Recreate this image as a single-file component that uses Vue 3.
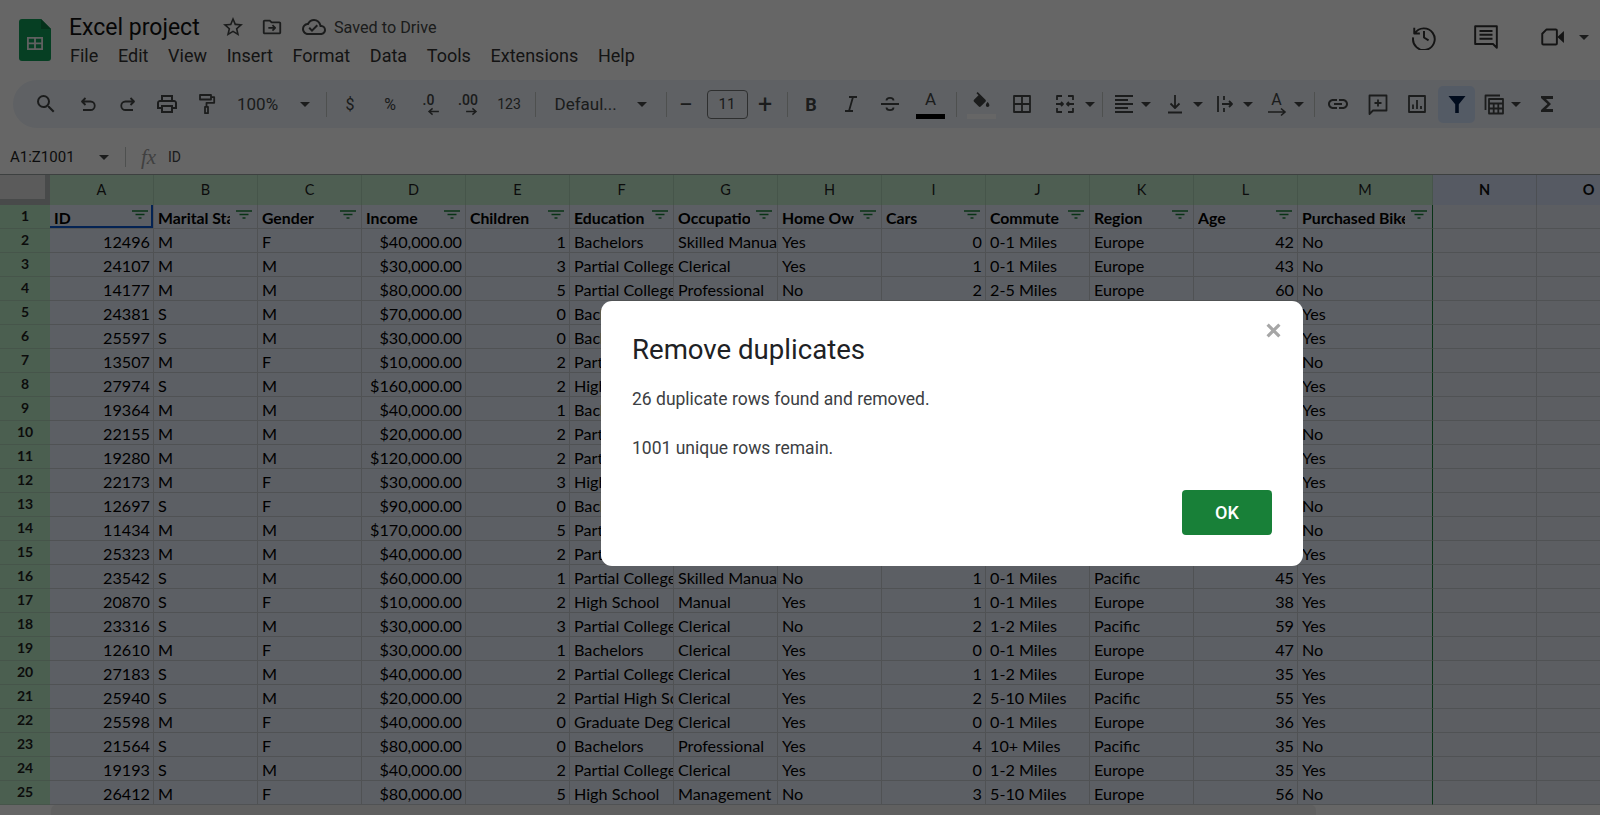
<template>
  <div class="page">
    <header class="top">
      <svg class="logo" viewBox="0 0 32 42">
        <path d="M3 0h19l10 10v29a3 3 0 0 1-3 3H3a3 3 0 0 1-3-3V3a3 3 0 0 1 3-3z" fill="#0f9d58" />
        <path d="M22 0l10 10H22z" fill="#0a7a43" />
        <path d="M8 18h16v13H8z M9.8 19.8v3.6h5.3v-3.6z M16.9 19.8v3.6h5.3v-3.6z M9.8 25.2v4h5.3v-4z M16.9 25.2v4h5.3v-4z" fill="#f1f1f1" fill-rule="evenodd" />
      </svg>
      <div class="top-mid">
        <div class="title-row">
          <span class="doc-title">Excel project</span>
          <Ic class="t-star" name="star" />
          <Ic class="t-folder" name="folder" />
          <Ic class="t-cloud" name="cloud" />
          <span class="saved">Saved to Drive</span>
        </div>
        <nav class="menu">
          <span v-for="m in menus" :key="m">{{ m }}</span>
        </nav>
      </div>
      <div class="top-right">
        <Ic class="big" name="history" />
        <Ic class="big comments" name="comments" />
        <Ic class="big video" name="video" />
        <span class="arr video-arr"></span>
      </div>
    </header>

    <div class="toolbar">
      <div
        v-for="(item, i) in tools"
        :key="i"
        class="tool"
        :class="item.cls"
        :style="{ width: item.w + 'px', marginLeft: item.ml + 'px' }"
      >
        <Ic v-if="item.ic" :name="item.ic" />
        <span v-if="item.t">{{ item.t }}</span>
        <svg v-if="item.dir" class="small-arrow" :class="item.dir" viewBox="0 0 14 10">
          <path d="M1 5h11 M8 1.5l4 3.5-4 3.5" />
        </svg>
        <svg v-if="item.long" class="long-arrow" viewBox="0 0 20 10">
          <path d="M1 5h17 M14 1.5l4 3.5-4 3.5" />
        </svg>
      </div>
    </div>

    <div class="formula">
      <span class="range">A1:Z1001</span>
      <span class="arr"></span>
      <span class="f-sep"></span>
      <span class="fx">fx</span>
      <span class="f-val">ID</span>
    </div>

    <div class="sheet">
      <div class="grid">
        <div class="corner"><div></div></div>
        <div v-for="(c, i) in columns" :key="c" class="col-head" :class="{ sel: i < 13 }">{{ c }}</div>

        <div class="row-head">1</div>
        <div v-for="(h, i) in heads" :key="h" class="cell head" :class="{ active: i === 0, edge: i === 12 }">
          <span class="clip">{{ h }}</span>
          <svg class="flt" viewBox="0 0 16 9"><path d="M0 1h16 M3.5 4.5h9 M6.5 8h3" /></svg>
        </div>
        <div class="cell blank"></div>
        <div class="cell blank"></div>

        <template v-for="(r, ri) in rows" :key="ri">
          <div class="row-head">{{ ri + 2 }}</div>
          <div
            v-for="(v, ci) in r"
            :key="ci"
            class="cell"
            :class="{ num: numeric.includes(ci), edge: ci === 12 }"
          >
            <span class="clip">{{ v }}</span>
          </div>
          <div class="cell blank"></div>
          <div class="cell blank"></div>
        </template>
      </div>
      <div class="scroll"><div class="thumb"></div></div>
    </div>

    <div class="shade"></div>
    <div class="dialog">
      <svg class="close" viewBox="0 0 14 14"><path d="M1.5 1.5l11 11 M12.5 1.5l-11 11" /></svg>
      <h2>Remove duplicates</h2>
      <p>26 duplicate rows found and removed.</p>
      <p class="second">1001 unique rows remain.</p>
      <div class="actions">
        <button class="ok">OK</button>
      </div>
    </div>
  </div>
</template>

<script setup>
import { h } from 'vue'

const icons = {
  search: { f: 'M15.5 14h-.79l-.28-.27A6.471 6.471 0 0 0 16 9.5 6.5 6.5 0 1 0 9.5 16c1.61 0 3.09-.59 4.23-1.57l.27.28v.79l5 4.99L20.49 19l-4.99-5zm-6 0C7.01 14 5 11.99 5 9.5S7.01 5 9.5 5 14 7.01 14 9.5 11.99 14 9.5 14z' },
  undo: { s: 'M9.5 6L6 9.5 9.5 13 M6 9.5h8.5a4 4 0 0 1 0 8.5H7' },
  redo: { s: 'M14.5 6L18 9.5 14.5 13 M18 9.5H9.5a4 4 0 0 0 0 8.5H17' },
  print: { f: 'M19 8h-1V3H6v5H5c-1.66 0-3 1.34-3 3v6h4v4h12v-4h4v-6c0-1.66-1.34-3-3-3zM8 5h8v3H8V5zm8 12v2H8v-4h8v2zm2-2v-2H6v2H4v-4c0-.55.45-1 1-1h14c.55 0 1 .45 1 1v4h-2z' },
  paint: { s: 'M5 3h11v4.5H5z M16 5.2h3.2v5.6h-7.7v4 M10 14.8h3v6.4h-3z' },
  italic: { s: 'M10 5h8 M14 5l-4 14 M6 19h8' },
  strike: { s: 'M3 12h18 M8.5 8.5C8.5 5 15.5 5 15.5 8.5 M8.5 15.5c0 3.5 7 3.5 7 0' },
  fill: { f: 'M16.56 8.94L7.62 0 6.21 1.41l2.38 2.38-5.15 5.15c-.59.59-.59 1.54 0 2.12l5.5 5.5c.29.29.68.44 1.06.44s.77-.15 1.06-.44l5.5-5.5c.59-.58.59-1.53 0-2.12zM19 11.5s-2 2.17-2 3.5c0 1.1.9 2 2 2s2-.9 2-2c0-1.33-2-3.5-2-3.5z' },
  borders: { s: 'M4 4h16v16H4z M12 4v16 M4 12h16' },
  merge: { s: 'M9 4H4v4 M15 4h5v4 M9 20H4v-4 M15 20h5v-4 M3 12h7 M8 10l2 2-2 2 M21 12h-7 M16 10l-2 2 2 2' },
  halign: { s: 'M3 4h18 M3 8h13 M3 12h18 M3 16h13 M3 20h18' },
  valign: { s: 'M12 3v13 M7.5 11.5L12 16l4.5-4.5 M5 20.5h14' },
  wrap: { s: 'M5 4v16 M11 4v4 M11 16v4 M9 12h10 M16 9l3 3-3 3' },
  link: { f: 'M17 7h-4v2h4c1.65 0 3 1.35 3 3s-1.35 3-3 3h-4v2h4c2.76 0 5-2.24 5-5s-2.24-5-5-5zm-6 8H7c-1.65 0-3-1.35-3-3s1.35-3 3-3h4V7H7c-2.76 0-5 2.24-5 5s2.24 5 5 5h4v-2zm-3-4h8v2H8z' },
  addcomment: { s: 'M3.5 3.5h17v15H7l-3.5 3.5z M12 7.5v7 M8.5 11h7' },
  chart: { s: 'M4 4h16v16H4z M8 12.5V17 M12 8v9 M16 14v3' },
  filter: { f: 'M3.5 4h17l-6.7 8.2V21h-3.6v-8.8z' },
  calc: { s: 'M3.5 18V3.5H18 M7 7h14v14.5H7z M7 11.5h14 M7 16.5h14 M11.7 11.5v10 M16.3 11.5v10' },
  sigma: { f: 'M18 4H6v2l6.5 6L6 18v2h12v-3h-7l5-5-5-5h7z' },
  star: { f: 'M22 9.24l-7.19-.62L12 2 9.19 8.63 2 9.24l5.46 4.73L5.82 21 12 17.27 18.18 21l-1.63-7.03L22 9.24zM12 15.4l-3.76 2.27 1-4.28-3.32-2.88 4.38-.38L12 6.1l1.71 4.04 4.38.38-3.32 2.88 1 4.28L12 15.4z' },
  folder: { f: 'M20 6h-8l-2-2H4c-1.1 0-2 .9-2 2v12c0 1.1.9 2 2 2h16c1.1 0 2-.9 2-2V8c0-1.1-.9-2-2-2zm0 12H4V6h5.17l2 2H20v10z', s: 'M8 13h7 M12.5 10l3 3-3 3' },
  cloud: { f: 'M19.35 10.04A7.49 7.49 0 0 0 12 4C9.11 4 6.6 5.64 5.35 8.04A5.994 5.994 0 0 0 0 14c0 3.31 2.69 6 6 6h13c2.76 0 5-2.24 5-5 0-2.64-2.05-4.78-4.65-4.96zM19 18H6c-2.21 0-4-1.79-4-4 0-2.05 1.53-3.76 3.56-3.97l1.07-.11.5-.95A5.469 5.469 0 0 1 12 6c2.62 0 4.88 1.86 5.39 4.43l.3 1.5 1.53.11A2.98 2.98 0 0 1 22 15c0 1.65-1.35 3-3 3zm-9-3.82l-2.09-2.09L6.5 13.5 10 17l6.01-6.01-1.41-1.41z' },
  history: { s: 'M3 3.5v5.2h5.2 M3.4 8.7A10 10 0 1 1 2 12.4 M12 6.5v6l4.2 2.6' },
  comments: { s: 'M2 2h20v20l-3.5-3.5H2z M6 6.5h12 M6 10h12 M6 13.7h12' },
  video: { s: 'M7 5h8.5a1 1 0 0 1 1 1v12a1 1 0 0 1-1 1H4a1 1 0 0 1-1-1V9z', f: 'M17 12l6-5.5v11z' }
}

// small functional component, so the svg markup isn't repeated everywhere
const Ic = (props) => {
  const icon = icons[props.name]
  const kids = []
  if (icon.f) kids.push(h('path', { d: icon.f, fill: 'currentColor' }))
  if (icon.s) {
    kids.push(h('path', {
      d: icon.s,
      fill: 'none',
      stroke: 'currentColor',
      'stroke-width': 1.8,
      'stroke-linejoin': 'round'
    }))
  }
  return h('svg', { class: 'ic', viewBox: '0 0 24 24' }, kids)
}
Ic.props = ['name']

const menus = ['File', 'Edit', 'View', 'Insert', 'Format', 'Data', 'Tools', 'Extensions', 'Help']

const sep = (ml) => ({ w: 1, ml, cls: 'sep' })
const arr = (ml) => ({ w: 10, ml, cls: 'arr-tool' })

const tools = [
  { ic: 'search', w: 24, ml: 21 },
  { ic: 'undo', w: 24, ml: 18 },
  { ic: 'redo', w: 24, ml: 15.5 },
  { ic: 'print', w: 24, ml: 15.5 },
  { ic: 'paint', w: 24, ml: 16 },
  { t: '100%', w: 46, ml: 18, cls: 'zoom' },
  arr(17),
  sep(16),
  { t: '$', w: 14, ml: 16, cls: 'sym' },
  { t: '%', w: 16, ml: 25, cls: 'sym' },
  { t: '.0', w: 20, ml: 20.5, cls: 'dec', dir: 'left' },
  { t: '.00', w: 26, ml: 16.5, cls: 'dec', dir: 'right' },
  { t: '123', w: 26, ml: 15, cls: 'fmt' },
  sep(12.5),
  { t: 'Defaul...', w: 66, ml: 19, cls: 'zoom font' },
  arr(16.5),
  sep(18.5),
  { t: '−', w: 24, ml: 7.5, cls: 'pm' },
  { t: '11', w: 41, ml: 8.5, cls: 'size' },
  { t: '+', w: 24, ml: 5.5, cls: 'pm' },
  sep(9.5),
  { t: 'B', w: 24, ml: 11.5, cls: 'bold' },
  { ic: 'italic', w: 24, ml: 15.5 },
  { ic: 'strike', w: 24, ml: 15.5 },
  { t: 'A', w: 29, ml: 14, cls: 'color' },
  sep(11),
  { ic: 'fill', w: 29, ml: 10, cls: 'fillc' },
  { ic: 'borders', w: 24, ml: 14 },
  { ic: 'merge', w: 24, ml: 19 },
  arr(8),
  sep(7),
  { ic: 'halign', w: 24, ml: 9 },
  arr(5),
  { ic: 'valign', w: 24, ml: 12 },
  arr(5.5),
  { ic: 'wrap', w: 24, ml: 10.5 },
  arr(6),
  { t: 'A', w: 24, ml: 11.5, cls: 'rot', long: true },
  arr(5.5),
  sep(9.5),
  { ic: 'link', w: 24, ml: 11.5 },
  { ic: 'addcomment', w: 24, ml: 15.5 },
  { ic: 'chart', w: 24, ml: 15.5 },
  { ic: 'filter', w: 37, ml: 9, cls: 'on' },
  { ic: 'calc', w: 24, ml: 7 },
  arr(5),
  { ic: 'sigma', w: 24, ml: 14 }
]

const columns = 'ABCDEFGHIJKLMNO'.split('')
const heads = ['ID', 'Marital Status', 'Gender', 'Income', 'Children', 'Education', 'Occupation', 'Home Owner', 'Cars', 'Commute Distance', 'Region', 'Age', 'Purchased Bike']
const numeric = [0, 3, 4, 8, 11]

const rows = [
  [12496, 'M', 'F', '$40,000.00', 1, 'Bachelors', 'Skilled Manual', 'Yes', 0, '0-1 Miles', 'Europe', 42, 'No'],
  [24107, 'M', 'M', '$30,000.00', 3, 'Partial College', 'Clerical', 'Yes', 1, '0-1 Miles', 'Europe', 43, 'No'],
  [14177, 'M', 'M', '$80,000.00', 5, 'Partial College', 'Professional', 'No', 2, '2-5 Miles', 'Europe', 60, 'No'],
  [24381, 'S', 'M', '$70,000.00', 0, 'Bachelors', 'Professional', 'Yes', 1, '5-10 Miles', 'Pacific', 41, 'Yes'],
  [25597, 'S', 'M', '$30,000.00', 0, 'Bachelors', 'Clerical', 'No', 0, '0-1 Miles', 'Europe', 36, 'Yes'],
  [13507, 'M', 'F', '$10,000.00', 2, 'Partial College', 'Manual', 'Yes', 0, '1-2 Miles', 'Europe', 50, 'No'],
  [27974, 'S', 'M', '$160,000.00', 2, 'High School', 'Management', 'Yes', 4, '0-1 Miles', 'Pacific', 33, 'Yes'],
  [19364, 'M', 'M', '$40,000.00', 1, 'Bachelors', 'Skilled Manual', 'Yes', 0, '0-1 Miles', 'Europe', 43, 'Yes'],
  [22155, 'M', 'M', '$20,000.00', 2, 'Partial High School', 'Clerical', 'Yes', 2, '5-10 Miles', 'Pacific', 58, 'No'],
  [19280, 'M', 'M', '$120,000.00', 2, 'Partial College', 'Manual', 'Yes', 1, '0-1 Miles', 'Europe', 40, 'Yes'],
  [22173, 'M', 'F', '$30,000.00', 3, 'High School', 'Skilled Manual', 'No', 2, '1-2 Miles', 'Pacific', 54, 'Yes'],
  [12697, 'S', 'F', '$90,000.00', 0, 'Bachelors', 'Professional', 'No', 4, '10+ Miles', 'Pacific', 36, 'No'],
  [11434, 'M', 'M', '$170,000.00', 5, 'Partial College', 'Professional', 'Yes', 0, '0-1 Miles', 'Europe', 55, 'No'],
  [25323, 'M', 'M', '$40,000.00', 2, 'Partial College', 'Clerical', 'Yes', 1, '1-2 Miles', 'Europe', 35, 'Yes'],
  [23542, 'S', 'M', '$60,000.00', 1, 'Partial College', 'Skilled Manual', 'No', 1, '0-1 Miles', 'Pacific', 45, 'Yes'],
  [20870, 'S', 'F', '$10,000.00', 2, 'High School', 'Manual', 'Yes', 1, '0-1 Miles', 'Europe', 38, 'Yes'],
  [23316, 'S', 'M', '$30,000.00', 3, 'Partial College', 'Clerical', 'No', 2, '1-2 Miles', 'Pacific', 59, 'Yes'],
  [12610, 'M', 'F', '$30,000.00', 1, 'Bachelors', 'Clerical', 'Yes', 0, '0-1 Miles', 'Europe', 47, 'No'],
  [27183, 'S', 'M', '$40,000.00', 2, 'Partial College', 'Clerical', 'Yes', 1, '1-2 Miles', 'Europe', 35, 'Yes'],
  [25940, 'S', 'M', '$20,000.00', 2, 'Partial High School', 'Clerical', 'Yes', 2, '5-10 Miles', 'Pacific', 55, 'Yes'],
  [25598, 'M', 'F', '$40,000.00', 0, 'Graduate Degree', 'Clerical', 'Yes', 0, '0-1 Miles', 'Europe', 36, 'Yes'],
  [21564, 'S', 'F', '$80,000.00', 0, 'Bachelors', 'Professional', 'Yes', 4, '10+ Miles', 'Pacific', 35, 'No'],
  [19193, 'S', 'M', '$40,000.00', 2, 'Partial College', 'Clerical', 'Yes', 0, '1-2 Miles', 'Europe', 35, 'Yes'],
  [26412, 'M', 'F', '$80,000.00', 5, 'High School', 'Management', 'No', 3, '5-10 Miles', 'Europe', 56, 'No']
]
</script>

<style>
html, body {
  margin: 0;
  overflow: hidden;
}
</style>

<style scoped>
.page {
  position: relative;
  width: 1600px;
  height: 815px;
  overflow: hidden;
  background: #fff;
  display: flex;
  flex-direction: column;
  font-family: Roboto, "Liberation Sans", sans-serif;
  color: #1f1f1f;
}

.ic {
  width: 24px;
  height: 24px;
  display: block;
  color: #444746;
}

/* top bar */
.top {
  height: 80px;
  display: flex;
  flex-shrink: 0;
  padding: 19px 0 0 19px;
  box-sizing: border-box;
}
.logo {
  width: 32px;
  height: 42px;
  flex-shrink: 0;
}
.top-mid {
  margin-left: 18px;
  margin-top: -5px;
}
.title-row {
  display: flex;
  align-items: center;
  height: 26px;
}
.doc-title {
  font-size: 23px;
  width: 145px;
  color: #111;
}
.t-star { margin-left: 7px; }
.t-folder { margin-left: 16px; width: 22px; }
.t-cloud { margin-left: 19px; }
.saved {
  font-size: 16.2px;
  color: #444746;
  margin-left: 8px;
}
.menu {
  display: flex;
  gap: 19.7px;
  font-size: 18px;
  margin-top: 5px;
  margin-left: 1px;
  color: #333;
}
.top-right {
  margin-left: auto;
  display: flex;
  align-items: flex-start;
  padding-top: 5px;
  position: relative;
}
.big {
  width: 26px;
  height: 26px;
  color: #333;
}
.comments { margin-left: 36px; }
.video { margin-left: 40px; }
.video-arr {
  margin: 11px 11px 0 14px;
}

/* toolbar */
.arr {
  width: 0;
  height: 0;
  border-left: 5px solid transparent;
  border-right: 5px solid transparent;
  border-top: 5px solid #444746;
}
.toolbar {
  height: 48px;
  margin-left: 13px;
  background: #edf2fa;
  border-radius: 24px 0 0 24px;
  display: flex;
  align-items: center;
  flex-shrink: 0;
}
.tool {
  flex-shrink: 0;
  height: 37px;
  display: flex;
  flex-direction: column;
  align-items: center;
  justify-content: center;
  position: relative;
  font-size: 14px;
  color: #444746;
}
.sep {
  height: 25px;
  background: #c4c7c5;
}
.arr-tool::before {
  content: "";
  width: 0;
  height: 0;
  border-left: 5px solid transparent;
  border-right: 5px solid transparent;
  border-top: 5px solid #444746;
}
.zoom {
  font-size: 17px;
  align-items: flex-start;
  white-space: nowrap;
}
.font {
  font-size: 17px;
}
.sym { font-size: 16px; }
.fmt { font-size: 14px; }
.dec {
  font-size: 14px;
  font-weight: 500;
  line-height: 14px;
}
.small-arrow {
  width: 13px;
  height: 9px;
  fill: none;
  stroke: #444746;
  stroke-width: 1.6;
}
.small-arrow.left {
  transform: scaleX(-1);
  margin-left: 9px;
}
.small-arrow.right {
  margin-left: 6px;
}
.pm {
  font-size: 25px;
  font-weight: 400;
}
.size {
  box-sizing: border-box;
  height: 29px;
  border: 1px solid #747775;
  border-radius: 4px;
  font-size: 15px;
}
.bold {
  font-size: 18px;
  font-weight: 700;
}
.color {
  font-size: 17px;
  justify-content: flex-start;
  padding-top: 3px;
  box-sizing: border-box;
}
.color::after,
.fillc::after {
  content: "";
  position: absolute;
  left: 0;
  bottom: 4px;
  width: 29px;
  height: 5px;
  background: #000;
}
.fillc {
  justify-content: flex-start;
  padding-top: 6px;
  box-sizing: border-box;
}
.fillc::after {
  background: #fff;
}
.fillc .ic {
  width: 21px;
  height: 21px;
}
.rot {
  font-size: 16px;
  line-height: 17px;
}
.long-arrow {
  width: 20px;
  height: 10px;
  margin-top: -1px;
  fill: none;
  stroke: #444746;
  stroke-width: 1.6;
}
.on {
  background: #d3e3fd;
  border-radius: 5px;
}
.on .ic {
  color: #041e49;
}

/* formula bar */
.formula {
  height: 47px;
  flex-shrink: 0;
  display: flex;
  align-items: center;
  padding-top: 11px;
  box-sizing: border-box;
  font-size: 15px;
}
.range {
  margin-left: 10px;
  width: 89px;
}
.f-sep {
  width: 1px;
  height: 20px;
  background: #c4c7c5;
  margin-left: 16px;
}
.fx {
  font-family: "Liberation Serif", serif;
  font-style: italic;
  font-size: 21px;
  color: #a0a0a0;
  margin-left: 15px;
  width: 27px;
}
.f-val {
  font-size: 14px;
  color: #444746;
}

/* sheet */
.sheet {
  border-top: 1px solid #9aa0a0;
  flex: 1;
  min-height: 0;
  display: flex;
  flex-direction: column;
  margin-top: -1px;
}
.grid {
  display: grid;
  grid-template-columns: 50px repeat(12, 104px) 135px 104px 104px;
  grid-template-rows: 30px repeat(25, 24px);
  font-family: Lato, "Open Sans", sans-serif;
  font-size: 16.2px;
  color: #000;
  overflow: hidden;
  flex-shrink: 0;
}
.corner {
  background: #b5b8b8;
}
.corner div {
  width: 45px;
  height: 24px;
  background: #e3e3e3;
}
.col-head {
  background: #d6e2f8;
  border-right: 1px solid #bfc6d0;
  box-sizing: border-box;
  display: flex;
  align-items: center;
  justify-content: center;
  font-family: Lato, sans-serif;
  font-size: 14.5px;
  font-weight: 700;
  padding-bottom: 2px;
  color: #111;
}
.col-head.sel {
  background: #c4ecce;
  border-right-color: #aed4b8;
  font-weight: 400;
  color: #1f1f1f;
}
.row-head {
  background: #bbeec8;
  border-bottom: 1px solid #aed4b8;
  box-sizing: border-box;
  display: flex;
  align-items: flex-start;
  justify-content: center;
  padding-top: 2px;
  font-family: Lato, sans-serif;
  font-size: 14px;
  font-weight: 700;
  color: #1f1f1f;
}
.cell {
  background: #e7eefb;
  border-right: 1px solid #c8ccd2;
  border-bottom: 1px solid #c8ccd2;
  box-sizing: border-box;
  display: flex;
  align-items: flex-end;
  padding: 0 0 0 4px;
  min-width: 0;
  line-height: 21px;
  white-space: nowrap;
}
.clip {
  overflow: hidden;
  flex: 1;
  min-width: 0;
}
.num {
  padding-right: 3px;
}
.num .clip {
  text-align: right;
}
.head {
  font-weight: 700;
  font-size: 15.8px;
  padding-right: 5px;
}
.flt {
  width: 16px;
  height: 9px;
  flex-shrink: 0;
  align-self: flex-start;
  margin-top: 5px;
  margin-left: 6px;
  fill: none;
  stroke: #188038;
  stroke-width: 1.4;
}
.active {
  box-shadow: inset -2px -2px 0 #0b57d0;
}
.edge {
  border-right-color: #188038;
}
.sheet .grid .blank {
  background: #e6ecf6;
}
.scroll {
  flex: 1;
  padding-left: 51px;
  background: #fff;
}
.thumb {
  width: 1265px;
  height: 100%;
  background: #f1f1f1;
  border-radius: 5px 5px 0 0;
}

/* dialog */
.shade {
  position: absolute;
  inset: 0;
  background: rgba(0, 0, 0, 0.6);
}
.dialog {
  position: absolute;
  left: 601px;
  top: 301px;
  width: 702px;
  height: 265px;
  box-sizing: border-box;
  background: #fff;
  border-radius: 11px;
  padding: 32px 31px 0;
  display: flex;
  flex-direction: column;
}
.dialog h2 {
  margin: 0;
  font-size: 27.6px;
  font-weight: 400;
  line-height: 34px;
  color: #202124;
}
.dialog p {
  margin: 20px 0 0;
  font-size: 17.5px;
  line-height: 24px;
  color: #3c4043;
}
.dialog p.second {
  margin-top: 25px;
}
.close {
  position: absolute;
  right: 22px;
  top: 22px;
  width: 15px;
  height: 15px;
  fill: none;
  stroke: #a6a6a6;
  stroke-width: 3;
}
.actions {
  margin-top: 30px;
  display: flex;
  justify-content: flex-end;
}
.ok {
  width: 90px;
  height: 45px;
  background: #188038;
  color: #fff;
  border: 0;
  border-radius: 4px;
  font-family: Roboto, sans-serif;
  font-size: 18px;
  font-weight: 500;
}
</style>
